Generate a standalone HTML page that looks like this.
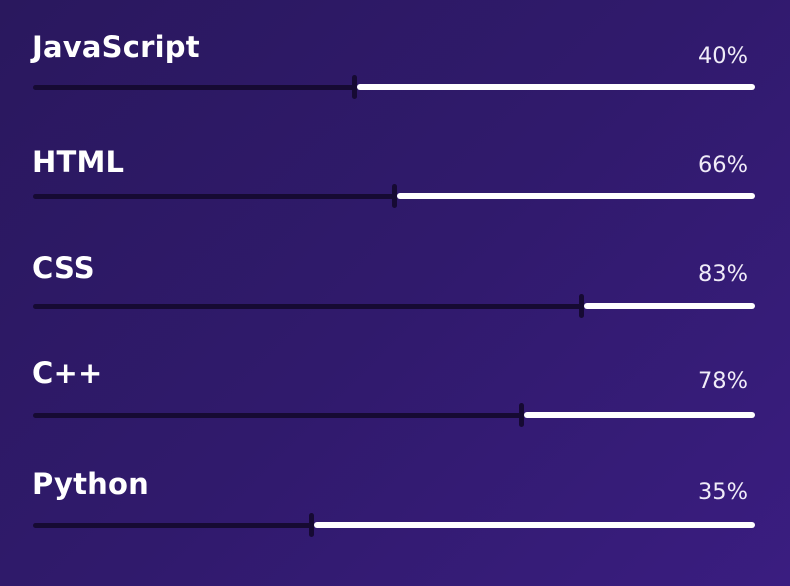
<!DOCTYPE html>
<html><head><style>
html,body{margin:0;padding:0}
body{width:790px;height:586px;overflow:hidden;position:relative;background:linear-gradient(135deg,#2a185e 0%,#301a6c 50%,#3a1d80 100%);font-family:"DejaVu Sans","Liberation Sans",sans-serif;color:#fff}
.l{position:absolute;left:32px;font-weight:bold;font-size:29px;line-height:1;letter-spacing:0.2px}
.p{position:absolute;right:42px;font-size:22.5px;line-height:1;color:#f0ecf8}
.d{position:absolute;left:33px;height:5px;border-radius:3px;background:#160a33}
.w{position:absolute;right:35px;height:6px;border-radius:3px;background:#fff}
.t{position:absolute;width:5px;height:24px;border-radius:3px;background:#160a33}
</style></head><body>
<div class="l" style="top:33px">JavaScript</div><div class="p" style="top:45px">40%</div>
<div class="d" style="top:85px;width:322px"></div><div class="w" style="top:84px;left:357px"></div><div class="t" style="top:75px;left:352px"></div>

<div class="l" style="top:148px">HTML</div><div class="p" style="top:154px">66%</div>
<div class="d" style="top:194px;width:362px"></div><div class="w" style="top:193px;left:397px"></div><div class="t" style="top:184px;left:392px"></div>

<div class="l" style="top:254px">CSS</div><div class="p" style="top:263px">83%</div>
<div class="d" style="top:304px;width:549px"></div><div class="w" style="top:303px;left:584px"></div><div class="t" style="top:294px;left:579px"></div>

<div class="l" style="top:359px">C++</div><div class="p" style="top:370px">78%</div>
<div class="d" style="top:413px;width:489px"></div><div class="w" style="top:412px;left:524px"></div><div class="t" style="top:403px;left:519px"></div>

<div class="l" style="top:470px">Python</div><div class="p" style="top:481px">35%</div>
<div class="d" style="top:523px;width:279px"></div><div class="w" style="top:522px;left:314px"></div><div class="t" style="top:513px;left:309px"></div>
</body></html>
